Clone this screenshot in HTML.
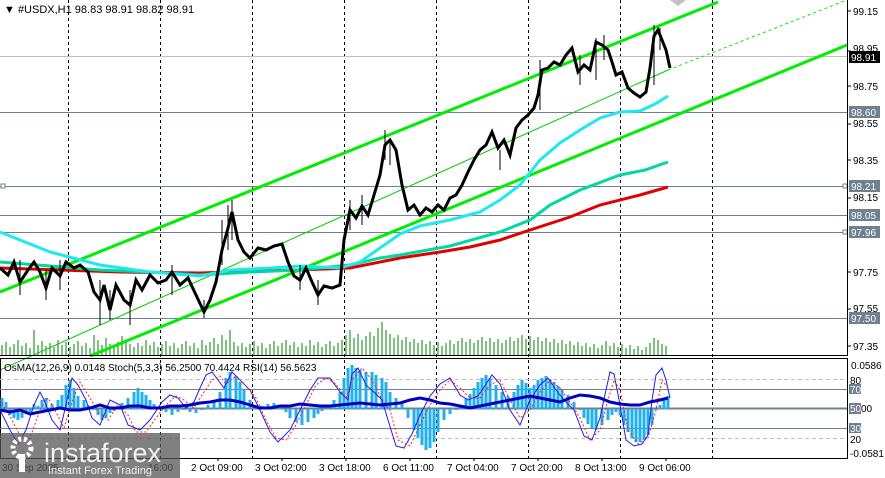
<!DOCTYPE html>
<html><head><meta charset="utf-8"><style>
html,body{margin:0;padding:0;background:#fff;width:885px;height:478px;overflow:hidden}
svg{display:block;font-family:"Liberation Sans",sans-serif}
</style></head><body>
<svg width="885" height="478" viewBox="0 0 885 478" xmlns="http://www.w3.org/2000/svg">
<rect width="885" height="478" fill="#fff"/>
<g stroke="#000" stroke-width="1" stroke-dasharray="3,3">
<line x1="68.5" y1="0" x2="68.5" y2="458"/><line x1="160.5" y1="0" x2="160.5" y2="458"/>
<line x1="252.5" y1="0" x2="252.5" y2="458"/><line x1="344.5" y1="0" x2="344.5" y2="458"/>
<line x1="436.5" y1="0" x2="436.5" y2="458"/><line x1="528.5" y1="0" x2="528.5" y2="458"/>
<line x1="620.5" y1="0" x2="620.5" y2="458"/><line x1="712.5" y1="0" x2="712.5" y2="458"/>
</g>
<line x1="0" y1="56.5" x2="847" y2="56.5" stroke="#c0c0c0"/>
<g stroke="#708090">
<line x1="0" y1="112.5" x2="847" y2="112.5"/><line x1="0" y1="186.5" x2="847" y2="186.5"/>
<line x1="0" y1="215.5" x2="847" y2="215.5"/><line x1="0" y1="232.5" x2="847" y2="232.5"/>
<line x1="0" y1="318.5" x2="847" y2="318.5"/>
</g>
<rect x="843" y="184" width="4" height="4" fill="#fff" stroke="#708090"/>
<rect x="843" y="230" width="4" height="4" fill="#fff" stroke="#708090"/>
<rect x="1" y="184" width="4" height="4" fill="#fff" stroke="#708090"/>
<path d="M2 355V345M6 355V342M10 355V347M14 355V344M18 355V340M22 355V346M26 355V343M30 355V348M34 355V330M38 355V345M42 355V341M46 355V346M50 355V343M54 355V347M58 355V340M62 355V345M66 355V342M70 355V347M74 355V344M78 355V341M82 355V346M86 355V343M90 355V348M94 355V335M98 355V340M102 355V345M106 355V338M110 355V344M114 355V347M118 355V342M122 355V336M126 355V340M130 355V344M134 355V347M138 355V343M142 355V346M146 355V340M150 355V345M154 355V342M158 355V347M162 355V344M166 355V341M170 355V346M174 355V343M178 355V348M182 355V344M186 355V341M190 355V346M194 355V343M198 355V348M202 355V340M206 355V345M210 355V342M214 355V338M218 355V344M222 355V335M226 355V340M230 355V330M234 355V342M238 355V346M242 355V343M246 355V347M250 355V344M254 355V341M258 355V346M262 355V343M266 355V348M270 355V344M274 355V341M278 355V346M282 355V343M286 355V340M290 355V345M294 355V342M298 355V347M302 355V343M306 355V346M310 355V340M314 355V345M318 355V342M322 355V347M326 355V344M330 355V341M334 355V346M338 355V343M342 355V340M346 355V335M350 355V330M354 355V338M358 355V334M362 355V340M366 355V336M370 355V332M374 355V336M378 355V328M382 355V322M386 355V330M390 355V334M394 355V338M398 355V335M402 355V340M406 355V337M410 355V342M414 355V339M418 355V343M422 355V340M426 355V344M430 355V341M434 355V345M438 355V342M442 355V346M446 355V343M450 355V340M454 355V344M458 355V341M462 355V338M466 355V342M470 355V339M474 355V343M478 355V340M482 355V337M486 355V341M490 355V338M494 355V342M498 355V339M502 355V343M506 355V340M510 355V337M514 355V341M518 355V338M522 355V335M526 355V339M530 355V336M534 355V340M538 355V337M542 355V341M546 355V338M550 355V342M554 355V339M558 355V343M562 355V340M566 355V344M570 355V341M574 355V345M578 355V342M582 355V346M586 355V343M590 355V347M594 355V344M598 355V348M602 355V345M606 355V341M610 355V346M614 355V343M618 355V347M622 355V344M626 355V348M630 355V345M634 355V349M638 355V346M642 355V350M646 355V347M650 355V343M654 355V338M658 355V340M662 355V344M666 355V346" stroke="#008000" stroke-width="1"/>
<line x1="0" y1="292" x2="718" y2="2" stroke="#00ee00" stroke-width="3"/>
<line x1="90" y1="356" x2="847" y2="45" stroke="#00ee00" stroke-width="3"/>
<line x1="0" y1="370" x2="668" y2="70" stroke="#00cc00" stroke-width="1"/>
<line x1="668" y1="70" x2="847" y2="0" stroke="#00ee00" stroke-width="1" stroke-dasharray="3,3"/>
<polyline fill="none" stroke="#e00000" stroke-width="3" points="0,268 60,270 120,272 200,273 260,271 300,270 350,268 400,258 440,252 470,247 500,240 530,230 570,217 600,205 640,195 668,187"/>
<polyline fill="none" stroke="#00d8a0" stroke-width="3" points="0,262 50,266 100,270 150,272 200,275 250,272 300,270 350,265 380,258 400,255 450,246 500,232 530,220 550,205 580,190 620,175 645,170 668,162"/>
<polyline fill="none" stroke="#20e8f0" stroke-width="3" points="0,232 20,240 50,252 100,265 150,272 200,276 230,270 270,268 300,266 340,268 360,262 380,248 400,234 420,226 450,220 480,212 500,200 520,185 540,160 560,143 580,130 600,118 620,112 640,111 655,104 668,96"/>
<polyline fill="none" stroke="#000" stroke-width="3" points="0,268 8,275 14,262 20,282 28,270 34,262 40,272 46,288 52,268 60,276 66,262 74,268 80,265 88,272 94,292 100,300 104,285 110,310 116,285 124,300 130,305 136,280 142,290 150,275 158,283 166,280 172,272 180,285 188,278 196,295 204,312 210,300 216,282 222,250 228,228 232,212 238,240 244,252 250,258 258,248 266,250 274,246 282,244 288,262 294,276 300,280 306,268 312,282 318,295 324,286 332,288 340,285 344,240 350,210 356,218 362,206 368,215 374,195 380,175 385,145 390,140 396,150 402,185 408,210 414,205 420,215 426,208 432,212 438,205 444,210 450,198 456,195 462,185 468,172 474,160 480,150 486,145 492,132 498,148 504,140 510,155 516,128 522,120 528,115 534,108 538,95 542,70 548,68 554,62 560,65 566,55 572,48 578,72 584,65 590,70 596,42 602,45 608,50 612,62 616,75 622,72 628,88 634,93 640,97 646,92 650,68 654,36 658,30 662,40 666,50 670,68"/>
<g stroke="#000" stroke-width="1">
<path d="M385 130V160M390 138V165M222 220V265M228 205V250M232 200V240M654 25V85M660 28V50M540 60V110M580 55V85M596 38V80M604 35V60M100 280V325M130 290V325M500 150V170M20 260V295M46 270V300M60 260V290M110 290V320M172 265V295M204 300V318M300 265V290M318 280V305M350 200V230M362 195V225"/>
</g>
<line x1="847.5" y1="0" x2="847.5" y2="356" stroke="#000"/>
<line x1="0" y1="355.5" x2="848" y2="355.5" stroke="#000"/>
<text x="4" y="13" font-size="11" fill="#000">▼ #USDX,H1  98.83 98.91 98.82 98.91</text>
<g font-size="10" fill="#000">
<path d="M847 11h4M847 51h4M847 86h4M847 124h4M847 160h4M847 198h4M847 272h4M847 309h4M847 346h4" stroke="#000"/>
<text x="853" y="15">99.15</text><text x="853" y="52">98.95</text><text x="853" y="90">98.75</text>
<text x="853" y="127">98.55</text><text x="853" y="164">98.35</text><text x="853" y="201">98.15</text>
<text x="853" y="276">97.75</text><text x="853" y="312">97.55</text><text x="853" y="350">97.35</text>
</g>
<rect x="849" y="51" width="31" height="12" fill="#000"/><text x="851" y="61" font-size="10" fill="#fff">98.91</text>
<g fill="#708090"><rect x="849" y="106" width="31" height="12"/><rect x="849" y="180" width="31" height="12"/><rect x="849" y="209" width="31" height="12"/><rect x="849" y="226" width="31" height="12"/><rect x="849" y="312" width="31" height="12"/></g>
<g font-size="10" fill="#fff"><text x="851" y="116">98.60</text><text x="851" y="190">98.21</text><text x="851" y="219">98.05</text><text x="851" y="236">97.96</text><text x="851" y="322">97.50</text></g>
<rect x="0.5" y="358.5" width="847" height="100" fill="none" stroke="#000"/>
<line x1="0" y1="379.5" x2="847" y2="379.5" stroke="#c0c0c0" stroke-dasharray="4,3"/>
<line x1="0" y1="438.5" x2="847" y2="438.5" stroke="#c0c0c0" stroke-dasharray="4,3"/>
<line x1="0" y1="389.5" x2="847" y2="389.5" stroke="#708090"/>
<line x1="0" y1="428.5" x2="847" y2="428.5" stroke="#708090"/>
<line x1="0" y1="408.5" x2="847" y2="408.5" stroke="#708090" stroke-width="2"/>
<path d="M2 409V398M6 409V402M10 409V415M14 409V418M18 409V420M22 409V418M26 409V414M30 409V412M34 409V404M38 409V406M42 409V400M46 409V398M52 409V404M58 409V400M62 409V395M66 409V385M70 409V380M74 409V388M78 409V396M84 409V400M88 409V405M94 409V410M98 409V415M102 409V420M106 409V418M110 409V413M114 409V411M118 409V406M122 409V403M128 409V398M134 409V392M138 409V388M142 409V392M146 409V395M150 409V400M154 409V404M158 409V408M166 409V412M172 409V415M178 409V412M184 409V410M190 409V412M196 409V413M202 409V410M208 409V405M214 409V400M220 409V392M226 409V378M230 409V372M236 409V376M240 409V382M244 409V390M250 409V400M256 409V405M262 409V406M268 409V404M274 409V403M280 409V405M286 409V412M290 409V418M296 409V422M302 409V425M308 409V422M314 409V418M318 409V414M322 409V411M328 409V406M334 409V400M340 409V392M344 409V378M348 409V368M352 409V365M356 409V368M360 409V370M366 409V372M372 409V372M376 409V375M382 409V378M386 409V382M390 409V392M396 409V398M402 409V403M408 409V418M414 409V430M418 409V438M422 409V445M426 409V450M430 409V448M434 409V442M438 409V432M444 409V420M450 409V414M456 409V410M462 409V405M466 409V398M470 409V394M474 409V388M478 409V382M482 409V378M486 409V375M490 409V378M496 409V385M502 409V392M508 409V396M514 409V392M518 409V385M522 409V380M526 409V383M530 409V388M534 409V385M538 409V380M542 409V378M546 409V376M550 409V379M554 409V382M558 409V386M562 409V390M568 409V395M574 409V402M580 409V410M584 409V418M588 409V424M592 409V428M596 409V430M602 409V425M608 409V420M612 409V415M616 409V412M620 409V415M624 409V425M628 409V432M632 409V438M636 409V442M640 409V442M644 409V440M648 409V435M652 409V425M656 409V410M660 409V405M664 409V400M668 409V396" stroke="#20b0f0" stroke-width="3"/>
<polyline fill="none" stroke="#2020e0" stroke-width="1" points="0,410 10,430 18,444 26,430 34,405 40,392 44,400 52,420 60,430 66,405 72,378 78,385 86,400 92,418 100,425 110,400 120,405 128,425 140,430 150,420 162,402 170,395 178,398 186,408 194,402 200,388 206,375 212,372 218,380 224,388 232,372 240,380 250,390 260,410 270,432 278,442 290,430 300,410 310,390 318,378 330,378 340,392 348,400 352,374 358,368 366,385 374,392 382,400 388,420 396,446 404,448 412,434 420,415 430,396 440,384 450,378 460,395 468,400 478,396 486,384 492,375 500,384 510,410 520,425 530,400 540,385 548,378 556,390 564,400 574,410 584,436 592,440 600,418 606,390 610,372 614,374 620,405 626,440 634,446 642,444 648,435 652,400 656,375 662,368 666,380 670,398"/>
<polyline fill="none" stroke="#ff2020" stroke-width="1" stroke-dasharray="2,2" points="0,400 12,420 22,440 30,438 40,410 48,398 56,412 64,428 72,402 80,382 90,398 98,412 108,420 118,405 128,415 136,432 146,432 156,418 166,405 176,396 184,400 194,408 204,392 212,380 220,376 226,384 236,376 246,386 256,398 266,420 276,438 286,440 296,425 306,405 316,385 326,378 336,384 346,398 352,380 362,368 372,380 380,396 390,410 398,440 410,446 420,425 430,405 440,390 450,380 460,388 470,398 480,398 490,385 500,380 510,400 520,418 530,410 540,392 550,380 560,388 570,402 580,418 590,440 600,430 608,400 614,380 620,390 628,430 638,444 648,438 656,410 662,380 668,388"/>
<polyline fill="none" stroke="#0000c0" stroke-width="3" points="0,410 10,412 20,410 30,414 40,412 50,410 60,408 70,410 80,410 90,408 100,405 110,408 120,408 130,406 140,406 150,408 160,408 170,406 180,406 190,405 200,403 210,402 220,400 230,400 240,402 250,405 260,408 270,408 280,406 290,406 300,404 310,405 320,406 330,406 340,405 350,404 360,403 370,404 380,405 390,404 400,403 410,400 420,398 430,400 440,403 450,404 460,406 470,408 480,406 490,404 500,402 510,400 520,398 530,396 540,398 550,400 560,402 570,398 580,395 590,396 600,398 610,402 620,404 630,405 640,405 650,402 660,400 668,398"/>
<text x="4" y="371" font-size="10" fill="#000">OsMA(12,26,9) 0.0148  Stoch(5,3,3) 56.2500 70.4424  RSI(14) 56.5623</text>
<g font-size="10" fill="#000"><text x="851" y="369">0.0586</text><text x="850" y="384">80</text><text x="850" y="443">20</text><text x="850" y="457">-0.0581</text></g>
<g fill="#708090"><rect x="849" y="384" width="12" height="10"/><rect x="849" y="403" width="12" height="11"/><rect x="849" y="423" width="12" height="10"/></g>
<g font-size="10" fill="#fff"><text x="850" y="393">70</text><text x="850" y="412">50</text><text x="850" y="432">30</text></g>
<text x="861" y="412" font-size="10" fill="#000">00</text>
<g font-size="10" fill="#000">
<path d="M218 458v3M282 458v3M346 458v3M410 458v3M474 458v3M538 458v3M602 458v3M666 458v3" stroke="#000"/>
<text x="2" y="471">30 Sep 2025</text><text x="148" y="471">16:00</text>
<text x="191" y="471">2 Oct 09:00</text><text x="255" y="471">3 Oct 02:00</text><text x="319" y="471">3 Oct 18:00</text>
<text x="383" y="471">6 Oct 11:00</text><text x="447" y="471">7 Oct 04:00</text><text x="511" y="471">7 Oct 20:00</text>
<text x="575" y="471">8 Oct 13:00</text><text x="639" y="471">9 Oct 06:00</text>
</g>
<rect x="0" y="433" width="180" height="45" fill="#555" opacity="0.75"/>
<circle cx="22" cy="448" r="9" fill="none" stroke="#fff" stroke-width="5" stroke-dasharray="3,2.5"/>
<rect x="19" y="454" width="6" height="18" fill="#fff"/>
<text x="44" y="462" font-size="27" fill="#fff" opacity="0.9">instaforex</text>
<text x="48" y="474" font-size="11" fill="#fff" opacity="0.9">Instant Forex Trading</text>
<path d="M670 0l8 6 8-6z" fill="#c0c0c0"/>
</svg>
</body></html>
